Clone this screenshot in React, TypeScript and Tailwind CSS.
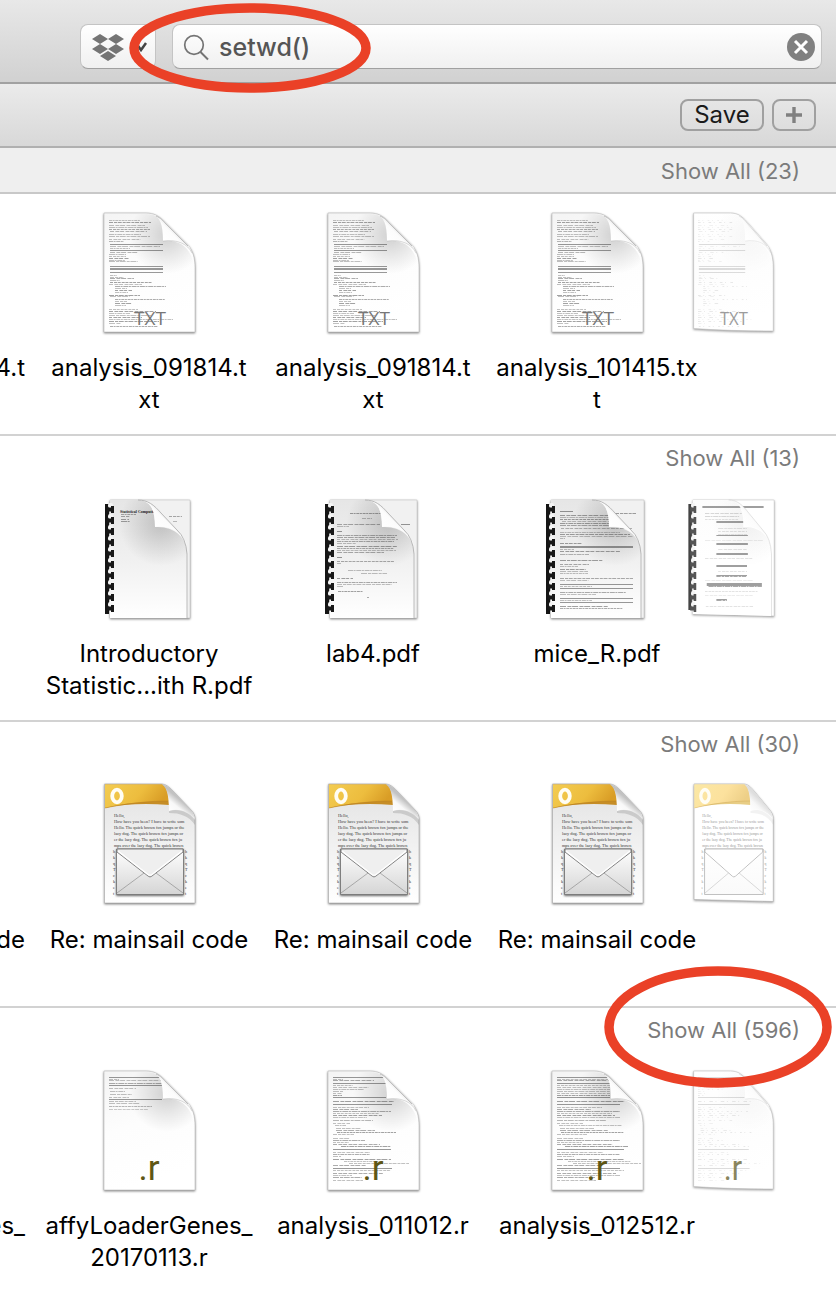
import { useId } from "react";
import type { ReactNode } from "react";

type Ink = [y: number, x: number, length: number, strength?: number];
type FileKind = "txt" | "r" | "pdf" | "mail";
interface FileItem {
  kind: FileKind;
  lines: string[];
  ink?: Ink[];
  left?: number;
  right?: number;
}
interface Section {
  count: number;
  clipped?: string;
  files: FileItem[];
  last: FileItem;
}

const txtInk: Ink[] = [
  [12, 24, 31], [14, 24, 42, 0.9], [17, 24, 36], [19, 24, 39], [21, 24, 41, 0.8], [23, 25, 37, 0.7],
  [26, 24, 32], [28, 24, 41], [31, 24, 32], [33, 24, 15, 0.7], [36, 25, 53, 1], [38, 25, 50], [40, 25, 20],
  [42, 25, 53, 1], [44, 25, 28, 0.7], [46, 24, 17], [48, 24, 17], [50, 24, 20, 0.9], [52, 24, 16], [53, 24, 29],
  [58, 25, 53, 1], [60, 25, 53, 1], [61, 25, 53, 1], [64, 25, 53, 1], [67, 25, 7],
  [69, 25, 14], [70, 25, 24, 0.8], [72, 25, 10], [74, 25, 42, 0.9], [76, 24, 33], [78, 30, 51, 0.8], [80, 30, 12],
  [82, 30, 17, 0.9], [84, 30, 13], [87, 24, 31, 0.9], [88, 25, 20], [91, 30, 50, 0.8], [93, 30, 12], [95, 30, 17, 0.9],
  [97, 30, 11], [101, 24, 29], [103, 24, 47, 0.9], [105, 24, 21], [107, 24, 42], [109, 24, 33, 0.9], [111, 24, 64],
  [113, 24, 50, 0.9], [115, 24, 12], [118, 25, 48, 0.8],
];
const affyInk: Ink[] = [
  [11, 24, 53, 1], [13, 24, 10], [14, 24, 52], [17, 24, 53, 0.8], [19, 24, 53, 1], [22, 24, 27], [25, 25, 15, 0.6],
  [28, 25, 22], [31, 24, 20, 0.6], [33, 24, 53, 1], [35, 24, 27, 0.6], [37, 24, 31, 0.6], [40, 24, 43, 0.7], [43, 24, 39, 0.5],
];
const rInk: Ink[] = [
  [11, 24, 53, 1], [13, 24, 10], [14, 24, 41, 0.8], [17, 24, 53, 1], [19, 24, 20], [21, 24, 36], [23, 24, 31],
  [25, 24, 10], [27, 24, 9], [29, 24, 9, 0.9], [31, 24, 53, 1], [35, 24, 61, 0.9], [38, 24, 59, 1], [41, 24, 36],
  [43, 24, 25, 0.8], [45, 24, 58, 0.8], [47, 24, 46], [49, 24, 49, 0.9], [51, 24, 34], [54, 24, 40, 0.7],
  [57, 24, 17], [59, 26, 11], [62, 27, 25], [64, 27, 39, 0.8], [66, 28, 59, 0.9], [68, 24, 21],
  [72, 24, 17], [74, 24, 32, 0.8], [76, 24, 16], [78, 24, 47, 0.8], [80, 32, 50, 0.9], [83, 24, 58, 1],
  [86, 24, 37], [88, 24, 37, 0.8], [90, 24, 8], [93, 24, 58, 0.9], [95, 35, 38], [97, 40, 60], [99, 24, 33, 0.8],
  [102, 24, 59, 1], [104, 24, 58], [107, 24, 50, 0.8], [109, 24, 19], [111, 24, 29, 0.8], [114, 24, 30],
];
const rInkTwo: Ink[] = rInk.map(([y, x, length, strength], i) => [
  y, x, y < 32 ? 53 : i % 3 === 0 ? 63 : Math.min(68, length + 9), strength,
]);
const bookInk: Ink[] = [[20, 36, 15, 0.8], [22, 36, 9, 0.8], [25, 36, 8, 0.9], [27, 36, 9, 0.9], [22, 84, 13, 0.8], [27, 88, 5]];
const labInk: Ink[] = [
  [19, 41, 31, 0.9], [24, 53, 10], [30, 28, 43, 0.8], [32, 28, 12], [30, 92, 9, 1], [37, 28, 5, 1],
  [41, 28, 60, 0.8], [43, 28, 58, 0.8], [45, 28, 61], [47, 28, 57, 0.8], [49, 28, 19], [52, 28, 60, 0.9], [54, 28, 57, 0.8],
  [56, 28, 59], [58, 28, 47, 0.8], [63, 28, 5, 1], [67, 28, 57, 0.8], [69, 28, 5], [76, 39, 34], [79, 52, 26],
  [84, 28, 16, 0.9], [88, 28, 60, 0.8], [90, 28, 55], [92, 28, 6], [97, 29, 25, 0.9], [103, 58, 2, 0.8],
];
const miceInk: Ink[] = [
  [17, 27, 13, 1], [19, 82, 21, 0.9], [21, 27, 49, 0.9], [23, 27, 49], [25, 27, 49, 0.9], [27, 29, 47], [29, 27, 49, 0.9],
  [31, 27, 49, 0.8], [34, 28, 71, 0.7], [38, 27, 60], [40, 27, 70, 0.9], [42, 27, 73], [44, 27, 5], [49, 27, 22, 0.9],
  [52, 27, 73, 1], [53, 27, 73, 1], [55, 27, 14], [57, 27, 60, 0.9], [60, 27, 29, 0.7], [66, 27, 43, 0.9], [70, 27, 29, 0.8],
  [72, 27, 18], [75, 27, 26, 0.9], [77, 27, 28], [79, 27, 28], [84, 27, 73, 0.8], [86, 27, 29],
  [90, 27, 73, 1], [92, 27, 32], [94, 27, 73, 1], [98, 27, 66, 0.8], [100, 27, 36], [104, 27, 73, 1], [106, 27, 32],
  [108, 27, 73, 1], [112, 27, 48, 0.9], [114, 27, 63, 0.8],
];
const lastPdfInk: Ink[] = [
  [12, 29, 70, 1], [13, 29, 70, 1], [19, 32, 42, 0.4], [22, 32, 39, 0.4], [25, 32, 38, 0.3], [27, 45, 31, 1], [28, 45, 31, 1],
  [34, 47, 33, 0.3], [37, 47, 33, 0.3], [40, 47, 33, 0.3], [41, 45, 36, 1], [46, 32, 66, 0.2], [49, 45, 36, 1], [50, 45, 36, 1],
  [55, 47, 33, 0.3], [59, 45, 36, 1], [60, 45, 36, 1], [64, 32, 54, 0.3], [71, 45, 35, 1], [72, 45, 35, 1], [77, 47, 33, 0.3],
  [81, 45, 35, 1], [82, 45, 35, 0.9], [86, 32, 55, 0.2], [89, 34, 63, 1], [90, 34, 63, 1], [91, 34, 63, 1], [92, 36, 61, 0.9],
  [97, 32, 60, 0.3], [101, 32, 55, 0.2], [105, 45, 12, 1], [106, 45, 12, 0.9], [112, 33, 54, 0.3],
];

function MicroText({ ink, faded = false }: { ink: Ink[]; faded?: boolean }) {
  return (
    <g fill="none" stroke="#333333">
      {ink.map(([y, x, length, strength = 0.6], i) => (
        <line
          key={i}
          x1={x}
          y1={y + 0.5}
          x2={x + length}
          y2={y + 0.5}
          strokeWidth={1}
          opacity={strength * (faded ? (strength === 1 ? 0.18 : 0.13) : 0.5)}
          strokeDasharray={
            faded && strength !== 1
              ? `${2 + (i % 3)} 3 1 5`
              : strength === 1
                ? "none"
                : `${3 + (i % 4)} ${0.6 + (i % 3) * 0.4} ${2 + (i % 3)} 0.7`
          }
        />
      ))}
    </g>
  );
}

function Drawing({ faded, children }: { faded: boolean; children: ReactNode }) {
  return (
    <svg
      viewBox="0 0 128 128"
      preserveAspectRatio="none"
      aria-hidden="true"
      className={faded ? "h-32 w-28 shrink-0" : "size-32 shrink-0"}
    >
      {children}
    </svg>
  );
}

const pageShadow = "drop-shadow(0 1px 1.2px rgb(0 0 0 / 0.5))";
const softShadow = "drop-shadow(0 1px 1.2px rgb(0 0 0 / 0.4))";

function TextIcon({ item, faded }: { item: FileItem; faded: boolean }) {
  const id = useId();
  return (
    <Drawing faded={faded}>
      <defs>
        <linearGradient id={`${id}p`} x1="0" y1="0" x2="0.25" y2="1">
          <stop offset="0" stopColor={faded ? "#ffffff" : "#f4f4f4"} />
          <stop offset="0.5" stopColor="#fdfdfd" />
          <stop offset="1" stopColor="#ffffff" />
        </linearGradient>
        <radialGradient id={`${id}s`} cx="82" cy="28" r="38" gradientUnits="userSpaceOnUse">
          <stop offset="0" stopColor="#000" stopOpacity={faded ? 0.03 : 0.17} />
          <stop offset="1" stopColor="#000" stopOpacity="0" />
        </radialGradient>
        <linearGradient id={`${id}c`} x1="79" y1="33" x2="91" y2="21" gradientUnits="userSpaceOnUse">
          <stop offset="0" stopColor="#ffffff" />
          <stop offset="0.65" stopColor="#fcfcfc" />
          <stop offset="1" stopColor={faded ? "#f0f0f0" : "#dcdcdc"} />
        </linearGradient>
      </defs>
      <path
        d={faded ? "M19 5H61C69 5 74 8 80 14L103 37C108 43 110 50 110 60V123Q60 123 19 120.5Z" : "M19 5H61C69 5 74 8 80 14L103 37C108 43 110 50 110 60V124H19Z"}
        fill={`url(#${id}p)`}
        stroke="#bbbbbb"
        strokeWidth="0.6"
        style={{ filter: faded ? softShadow : pageShadow }}
      />
      <path d="M20 6H61C69 6 74 9 78 14V33C96 31 108 41 109 62V90H20Z" fill={`url(#${id}s)`} />
      <MicroText ink={item.ink ?? []} faded={faded} />
      <path d="M66 6C75 8 78 16 78 33C91 31 102 35 107 44L104 38L80 14Q74 8 66 6Z" fill={`url(#${id}c)`} />
      <path d="M78 33C92 31 103 36 107 45" fill="none" stroke="#999" strokeWidth="0.6" opacity={faded ? 0.3 : 0.6} />
      <path d="M71 8C76 10 78 13 80 15L103 38" fill="none" stroke="#b0b0b0" strokeWidth="0.8" opacity={faded ? 0.5 : 1} />
      {item.kind === "txt" ? (
        <text x="65" y="117" textAnchor="middle" fontSize="19" fill={faded ? "#9c9c9c" : "#777"} className="font-['Open_Sans']">
          TXT
        </text>
      ) : (
        <text x="64" y="114" textAnchor="middle" fontSize="35" fill={faded ? "#89855d" : "#5e5615"} className="font-['Roboto']">
          .r
        </text>
      )}
    </Drawing>
  );
}

function PdfIcon({ item, faded }: { item: FileItem; faded: boolean }) {
  const id = useId();
  const l = item.left ?? 18;
  const r = item.right ?? 111;
  const bottom = faded ? 120 : 124;
  const rightBottom = faded ? 122 : 124;
  const fold = r - 35;
  const front = `M${l} 6H${fold - 17}C${fold - 5} 6 ${fold} 14 ${fold} 33C${fold + 20} 32 ${r - 3} 44 ${r - 3} 60V${rightBottom}L${l} ${bottom}Z`;
  return (
    <Drawing faded={faded}>
      <defs>
        <linearGradient id={`${id}p`} x1="0" y1="0" x2="0" y2="1">
          <stop offset="0" stopColor={faded ? "#fcfcfc" : "#e6e6e6"} />
          <stop offset="0.5" stopColor={faded ? "#ffffff" : "#f0f0f0"} />
          <stop offset="1" stopColor="#ffffff" />
        </linearGradient>
        <radialGradient id={`${id}s`} cx={fold + 6} cy="30" r="42" gradientUnits="userSpaceOnUse">
          <stop offset="0" stopColor="#000" stopOpacity={faded ? 0.05 : 0.18} />
          <stop offset="1" stopColor="#000" stopOpacity="0" />
        </radialGradient>
        <linearGradient id={`${id}c`} x1={fold} y1="33" x2={fold + 13} y2="20" gradientUnits="userSpaceOnUse">
          <stop offset="0" stopColor="#fff" />
          <stop offset="0.65" stopColor="#fcfcfc" />
          <stop offset="1" stopColor={faded ? "#f2f2f2" : "#d4d4d4"} />
        </linearGradient>
      </defs>
      <rect x={l - 5} y="10" width="4" height={bottom - 14} fill={faded ? "#444" : "#151515"} />
      <path
        d={`M${l} 6H${r}V${rightBottom}L${l} ${bottom}Z`}
        fill={faded ? "#fff" : "#f1f1f1"}
        stroke="#bcbcbc"
        strokeWidth="0.5"
        style={{ filter: faded ? softShadow : pageShadow }}
      />
      <path d={front} fill={`url(#${id}p)`} />
      <path d={front} fill={`url(#${id}s)`} />
      <path d={`M${r - 3} 60V${rightBottom}`} stroke="#bbb" strokeWidth="1" opacity={faded ? 0.4 : 1} />
      <MicroText ink={item.ink ?? []} />
      {l === 25 && (
        <text x="35" y="19" fontSize="4" fontWeight="700" fill="#222" className="font-['Liberation_Serif']">
          Statistical Computing
        </text>
      )}
      <path
        d={`M${fold - 17} 6C${fold - 4} 7 ${fold} 16 ${fold} 33C${fold + 15} 31 ${fold + 26} 38 ${r - 3} 52Q${r - 5} 44 ${fold + 22} 36L${fold + 6} 19C${fold - 1} 11 ${fold - 7} 6 ${fold - 17} 6Z`}
        fill={`url(#${id}c)`}
      />
      <path
        d={`M${fold - 17} 6C${fold - 7} 6 ${fold - 1} 11 ${fold + 6} 19L${fold + 22} 36Q${r - 4} 44 ${r - 3} 60`}
        fill="none"
        stroke="#aaa"
        strokeWidth="0.8"
        opacity={faded ? 0.4 : 1}
      />
      {Array.from({ length: 10 }, (_, i) => (
        <g key={i}>
          <rect x={l - 2} y={9 + i * 11} width="5" height="5" rx="2" fill="#f5f5f5" />
          <path d={`M${l - 3} ${13.5 + i * 11}h4v-1.5h3v7h-3v-1.5h-4z`} fill={faded ? "#555" : "#181818"} />
        </g>
      ))}
    </Drawing>
  );
}

const mailText = [
  "Hello,",
  "How have you been? I have to write som",
  "Hello. The quick brown fox jumps or the",
  "lazy dog.  The quick brown fox jumps or",
  "er the lazy dog.  The quick brown fox ju",
  "mps over the lazy dog.  The quick brown",
];

function MailIcon({ faded }: { faded: boolean }) {
  const id = useId();
  return (
    <Drawing faded={faded}>
      <defs>
        <linearGradient id={`${id}p`} x1="0" y1="0" x2="0" y2="1">
          <stop offset="0" stopColor={faded ? "#ffffff" : "#e2e2e2"} />
          <stop offset="1" stopColor="#ffffff" />
        </linearGradient>
        <linearGradient id={`${id}y`} x1="0" y1="0" x2="1" y2="0.3">
          <stop offset="0" stopColor={faded ? "#fbe8a5" : "#f3cc51"} />
          <stop offset="0.6" stopColor={faded ? "#fce19d" : "#edbd3e"} />
          <stop offset="1" stopColor={faded ? "#edcf87" : "#d99d26"} />
        </linearGradient>
        <linearGradient id={`${id}c`} x1="84" y1="31" x2="94" y2="19" gradientUnits="userSpaceOnUse">
          <stop offset="0" stopColor="#fff" />
          <stop offset="0.55" stopColor="#f8f8f8" />
          <stop offset="1" stopColor={faded ? "#dedede" : "#c2c2c2"} />
        </linearGradient>
        <linearGradient id={`${id}e`} x1="0" y1="0" x2="0" y2="1">
          <stop offset="0" stopColor="#ffffff" />
          <stop offset="1" stopColor={faded ? "#fafafa" : "#d5d5d5"} />
        </linearGradient>
      </defs>
      <path
        d={faded ? "M19.5 4H76C81 4 84 7 88 11L106 30C109 33 110 36 110 39V121.5L19.5 119.5Z" : "M19.5 4H76C81 4 84 7 88 11L106 30C109 33 110 36 110 39V123H19.5Z"}
        fill={`url(#${id}p)`}
        stroke="#aaa"
        strokeWidth="0.6"
        style={{ filter: faded ? softShadow : pageShadow }}
      />
      <path d="M20 4.5H77C81 6 84 14 84 25Q48 22 20 28Z" fill={faded ? "#e8cd85" : "#c68d26"} />
      <path d="M20 4.5H77C81 6 83 12 84 21C60 21 40 23 20 28Z" fill={`url(#${id}y)`} />
      <path d="M20 28C44 23 65 21 84 21" fill="none" stroke="#b98120" strokeWidth="0.8" opacity={faded ? 0.3 : 0.6} />
      <ellipse cx="32" cy="16" rx="4.8" ry="6.3" fill="none" stroke="#fffdf4" strokeWidth="3.8" />
      <g fill={faded ? "#999" : "#333"} className="font-['Liberation_Serif']">
        {mailText.map((line, i) => (
          <text key={line} x="29" y={37 + i * 6} fontSize="4.3">
            {line}
          </text>
        ))}
        {["h", "k", "q", "T", "c", "k", "e", "t"].map((letter, i) => (
          <g key={i} fontSize="4.2">
            <text x="28" y={73 + i * 6}>{letter}</text>
            <text x="100" y={73 + i * 6}>{letter}</text>
          </g>
        ))}
      </g>
      <path d="M77 4.5C83 8 84 20 84 31C93 28 103 31 110 39C109 35 108 32 105 29L88 11C84 7 81 5 77 4.5Z" fill={`url(#${id}c)`} />
      <path d="M84 31C94 28 104 32 110 40V45C104 36 95 33 84 33Z" fill="#000" opacity={faded ? 0.05 : 0.13} />
      <g stroke={faded ? "#b5b5b5" : "#777"} strokeWidth="0.9" strokeLinejoin="round">
        <rect x="31.5" y="69" width="67" height="45.5" fill={`url(#${id}e)`} style={faded ? undefined : { filter: "drop-shadow(0 1px 1px rgb(0 0 0 / .6))" }} />
        <path d="M32 113L59 93M98 113L71 93" fill="none" opacity="0.6" />
        <path d="M32 69H98V72L67 96Q65 98 63 96L32 72Z" fill={faded ? "#fff" : "#efefef"} />
        <path d="M33 71L63 94.5Q65 96 67 94.5L97 71" fill="none" stroke="#fff" strokeWidth="1.2" />
      </g>
    </Drawing>
  );
}

function FileIcon({ item, faded = false }: { item: FileItem; faded?: boolean }) {
  if (item.kind === "pdf") return <PdfIcon item={item} faded={faded} />;
  if (item.kind === "mail") return <MailIcon faded={faded} />;
  return <TextIcon item={item} faded={faded} />;
}

const mail: FileItem = { kind: "mail", lines: ["Re: mainsail code"] };
const sections: Section[] = [
  {
    count: 23,
    clipped: "4.t",
    files: [
      { kind: "txt", lines: ["analysis_091814.t", "xt"], ink: txtInk },
      { kind: "txt", lines: ["analysis_091814.t", "xt"], ink: txtInk },
      { kind: "txt", lines: ["analysis_101415.tx", "t"], ink: txtInk },
    ],
    last: { kind: "txt", lines: [], ink: txtInk },
  },
  {
    count: 13,
    files: [
      { kind: "pdf", lines: ["Introductory", "Statistic...ith R.pdf"], ink: bookInk, left: 25, right: 105 },
      { kind: "pdf", lines: ["lab4.pdf"], ink: labInk, left: 21, right: 108 },
      { kind: "pdf", lines: ["mice_R.pdf"], ink: miceInk, left: 18, right: 111 },
    ],
    last: { kind: "pdf", lines: [], ink: lastPdfInk },
  },
  { count: 30, clipped: "de", files: [mail, mail, mail], last: mail },
  {
    count: 596,
    clipped: "es_",
    files: [
      { kind: "r", lines: ["affyLoaderGenes_", "20170113.r"], ink: affyInk },
      { kind: "r", lines: ["analysis_011012.r"], ink: rInk },
      { kind: "r", lines: ["analysis_012512.r"], ink: rInkTwo },
    ],
    last: { kind: "r", lines: [], ink: rInk },
  },
];

function Toolbar() {
  return (
    <header className="flex h-[84px] items-start gap-4 border-b-2 border-[#a1a1a1] bg-linear-to-b from-[#e8e8e8] to-[#d1d1d1] pt-6 pr-3.5 pl-20">
      <button
        type="button"
        aria-label="Dropbox"
        className="flex h-[45px] w-19 shrink-0 items-center rounded-lg border border-[#c4c4c4] border-b-[#a0a0a0] bg-linear-to-b from-white to-[#f0f0f0] pl-2.5"
      >
        <svg viewBox="0 0 60 32" className="h-8 w-[60px]" aria-hidden="true">
          <path
            d="M9 3l8 5-8 5-8-5zM25 3l8 5-8 5-8-5zM9 13l8 5-8 5-8-5zM25 13l8 5-8 5-8-5zM17 20l8 5-8 5-8-5z"
            fill="#747474"
          />
          <path d="M45 12l5 7 5-7" fill="none" stroke="#444" strokeWidth="2.5" />
        </svg>
      </button>
      <div className="relative flex h-[45px] min-w-0 flex-1 items-center rounded-lg border border-[#c4c4c4] border-b-[#a0a0a0] bg-linear-to-b from-white to-[#f0f0f0] pr-1.5 pl-2.5">
        <svg viewBox="0 0 28 28" className="size-7 shrink-0" aria-hidden="true">
          <g fill="none" stroke="#747474" strokeWidth="1.7">
            <circle cx="11" cy="12" r="9.3" />
            <path d="M17.5 19L25 26.5" strokeWidth="2" />
          </g>
        </svg>
        <input
          type="text"
          aria-label="Search"
          defaultValue="setwd()"
          className="ml-2 min-w-0 flex-1 bg-transparent text-[25px] leading-8 font-medium text-[#555] outline-none"
        />
        <button type="button" aria-label="Clear search" className="shrink-0">
          <svg viewBox="0 0 28 28" className="size-7" aria-hidden="true">
            <circle cx="14" cy="14" r="14" fill="#808080" />
            <path d="M8 8l12 12M20 8L8 20" stroke="#fff" strokeWidth="3" />
          </svg>
        </button>
        <svg
          viewBox="0 0 242 90"
          className="pointer-events-none absolute -top-5.5 -left-11 z-10 h-[90px] w-[242px]"
          aria-hidden="true"
        >
          <ellipse cx="121" cy="45" rx="116" ry="40" fill="none" stroke="#ea4127" strokeWidth="9.5" />
        </svg>
      </div>
    </header>
  );
}

function SaveBar() {
  return (
    <div className="flex h-16 items-center justify-end gap-2 border-b-2 border-[#b0b0b0] bg-linear-to-b from-[#ebebeb] to-[#d8d8d8] pr-5">
      <button type="button" className="h-8 w-21 rounded-lg border-2 border-[#a0a0a0] text-2xl leading-7 text-[#1a1a1a]">
        Save
      </button>
      <button
        type="button"
        aria-label="Add search criterion"
        className="flex h-8 w-11 items-center justify-center rounded-lg border-2 border-[#a0a0a0]"
      >
        <svg viewBox="0 0 16 16" className="size-4" aria-hidden="true">
          <path d="M0 8h16M8 0v16" stroke="#808080" strokeWidth="3.4" />
        </svg>
      </button>
    </div>
  );
}

function FileSection({ section, pinned, circled }: { section: Section; pinned: boolean; circled: boolean }) {
  return (
    <section>
      <div
        className={
          pinned
            ? "flex h-[46px] items-center justify-end border-b-2 border-[#c8c8c8] bg-[#efefef] pt-0.5 pr-9"
            : "flex h-[46px] items-center justify-end border-t-2 border-[#d2d2d2] pr-9"
        }
      >
        <button type="button" className="relative text-[22px] leading-8 text-[#7b7b7b]">
          Show All ({section.count})
          {circled && (
            <svg
              viewBox="0 0 228 122"
              className="pointer-events-none absolute -top-12 -right-8 z-10 h-[122px] w-[228px] max-w-none"
              aria-hidden="true"
            >
              <ellipse cx="114" cy="61" rx="109" ry="56" fill="none" stroke="#ea4127" strokeWidth="9.5" />
            </svg>
          )}
        </button>
      </div>
      <div className="flex min-h-60 overflow-hidden pt-3.5 pb-4">
        <div className="mt-36 flex w-[37px] shrink-0 justify-end pr-3 text-2xl leading-8">{section.clipped}</div>
        {section.files.map((file, i) => (
          <figure key={i} className="flex w-56 shrink-0 flex-col items-center gap-4">
            <FileIcon item={file} />
            <figcaption className="text-center text-2xl leading-8 whitespace-nowrap">
              {file.lines.map((line) => (
                <span key={line} className="block">
                  {line}
                </span>
              ))}
            </figcaption>
          </figure>
        ))}
        <div className="-ml-8 flex-1">
          <FileIcon item={section.last} faded />
        </div>
      </div>
    </section>
  );
}

export default function App() {
  return (
    <div className="min-h-screen overflow-hidden bg-white font-['Inter','Liberation_Sans',sans-serif] text-black">
      <Toolbar />
      <SaveBar />
      <main>
        {sections.map((section, i) => (
          <FileSection key={section.count} section={section} pinned={i === 0} circled={i === 3} />
        ))}
      </main>
    </div>
  );
}
